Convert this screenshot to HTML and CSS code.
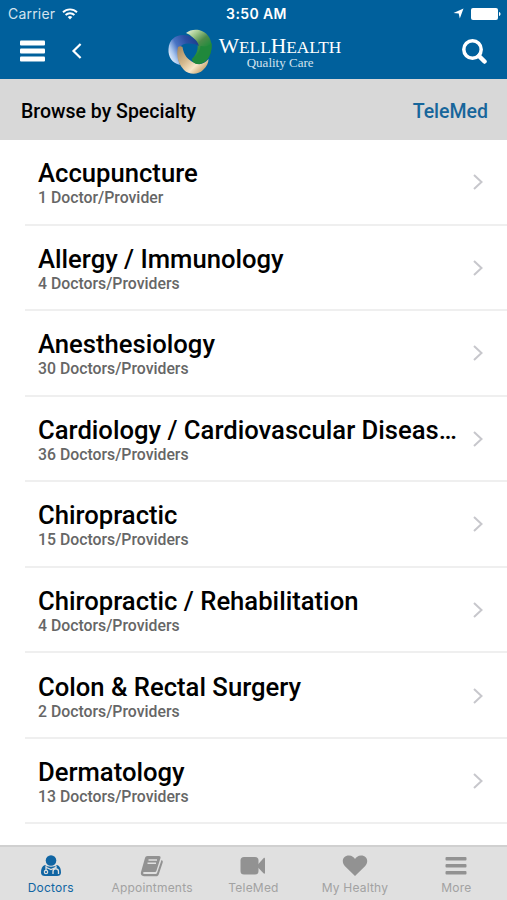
FILE: index.html
```html
<!DOCTYPE html>
<html lang="en">
<head>
  <meta charset="UTF-8">
  <meta name="viewport" content="width=device-width, initial-scale=1.0">
  <title>WellHealth Quality Care</title>
  <link rel="stylesheet" href="styles.css">
</head>
<body>
  <div class="app">
    <header class="header">
      <div class="status-bar">
        <div class="carrier">
          <span>Carrier</span>
          <svg width="16" height="12" viewBox="0 0 16 12" fill="none" stroke="#fff" stroke-width="1.9">
            <path d="M1 4.2a10 10 0 0 1 14 0M3.6 7a6.3 6.3 0 0 1 8.8 0"/>
            <path d="M8 11.5L5.7 9.1a3.3 3.3 0 0 1 4.6 0z" fill="#fff" stroke="none"/>
          </svg>
        </div>
        <div class="clock">3:50 AM</div>
        <div class="status-right">
          <svg width="11" height="11" viewBox="0 0 11 11"><path d="M10.500.5L6.800 10.500 5.700 5.600.5 5z" fill="#fff"/></svg>
          <svg width="30" height="12" viewBox="0 0 30 12" fill="#fff"><rect width="27" height="12" rx="2"/><path d="M28 4c2 .6 2 3.400 0 4z"/></svg>
        </div>
      </div>
      <div class="nav-bar">
        <div class="nav-left">
          <svg width="25" height="21" viewBox="0 0 25 21" fill="#fff">
            <rect y="-.5" width="25" height="5" rx="1"/><rect y="7.500" width="25" height="5" rx="1"/><rect y="15.500" width="25" height="5" rx="1"/>
          </svg>
          <svg width="10" height="16" viewBox="0 0 10 16"><path d="M8.600 1L1.500 8l7.100 7" fill="none" stroke="#fff" stroke-width="2.200"/></svg>
        </div>
        <div class="logo">
          <svg width="44" height="45" viewBox="0 0 44 45">
            <defs>
              <linearGradient id="blue" x1="0" y1=".8" x2="1" y2=".3">
                <stop offset="0" stop-color="#f4faff"/><stop offset=".2" stop-color="#a9c6ee"/><stop offset=".4" stop-color="#4a74c4"/><stop offset=".7" stop-color="#2b50a4"/><stop offset="1" stop-color="#1c3f8e"/>
              </linearGradient>
              <linearGradient id="green" x1="0" y1="0" x2=".6" y2="1">
                <stop offset="0" stop-color="#f1f9e4"/><stop offset=".25" stop-color="#a5ca90"/><stop offset=".5" stop-color="#4e8c4b"/><stop offset=".75" stop-color="#1f8c3c"/><stop offset="1" stop-color="#1b7a35"/>
              </linearGradient>
              <linearGradient id="gold" x1="0" y1="0" x2=".9" y2=".8">
                <stop offset="0" stop-color="#a3855a"/><stop offset=".45" stop-color="#d3b88d"/><stop offset=".75" stop-color="#f7e6c9"/><stop offset="1" stop-color="#c9a873"/>
              </linearGradient>
            </defs>
            <path d="M18 4C21 1 27 0 31 1c8 2 12 8 12.500 15 .5 9-4 17-12 19-4 .8-7-1-7.500-5 4-4 6.500-9 5.500-15C27 10 23 6 18 4z" fill="url(#green)"/>
            <path d="M12 36C4 34 0 28 .5 20 1 11 7 6 15 6c8 0 14 4 16 11-6-3-12-3-17-1-4 4-5 12-2 20z" fill="url(#blue)"/>
            <path d="M10 18c-2 9 0 17 6 23 5 5 14 5 19 0 4-4 5.500-7 5.500-11-4 5-9 6.500-14 4C20 31 15.500 26 14.500 18c-1.500-1-3-1-4.500 0z" fill="url(#gold)"/>
            <path d="M43.500 14c1 10-3.500 20-12 21-4 .5-7-1-7.500-5 5-3 8-7 8.500-13 4.500 1 9 .5 11-3z" fill="#20883b"/>
          </svg>
          <div class="logo-text">
            <div class="logo-name">W<small>ELL</small>H<small>EALTH</small></div>
            <div class="logo-tagline">Quality Care</div>
          </div>
        </div>
        <svg class="search" width="25" height="25" viewBox="0 0 25 25" fill="none" stroke="#fff">
          <circle cx="10.500" cy="10.500" r="8.700" stroke-width="3.500"/><path d="M17 17l5.500 5.500" stroke-width="4.500" stroke-linecap="round"/>
        </svg>
      </div>
    </header>

    <div class="sub-header">
      <span class="heading">Browse by Specialty</span>
      <span class="telemed">TeleMed</span>
    </div>

    <main class="list">
      <div class="item">
        <div class="item-text"><div class="name">Accupuncture</div><div class="count">1 Doctor/Provider</div></div>
        <svg class="chevron" viewBox="0 0 10 16"><path d="M1 1l7.500 7L1 15"/></svg>
      </div>
      <div class="item">
        <div class="item-text"><div class="name">Allergy / Immunology</div><div class="count">4 Doctors/Providers</div></div>
        <svg class="chevron" viewBox="0 0 10 16"><path d="M1 1l7.500 7L1 15"/></svg>
      </div>
      <div class="item">
        <div class="item-text"><div class="name">Anesthesiology</div><div class="count">30 Doctors/Providers</div></div>
        <svg class="chevron" viewBox="0 0 10 16"><path d="M1 1l7.500 7L1 15"/></svg>
      </div>
      <div class="item">
        <div class="item-text"><div class="name">Cardiology / Cardiovascular Diseas…</div><div class="count">36 Doctors/Providers</div></div>
        <svg class="chevron" viewBox="0 0 10 16"><path d="M1 1l7.500 7L1 15"/></svg>
      </div>
      <div class="item">
        <div class="item-text"><div class="name">Chiropractic</div><div class="count">15 Doctors/Providers</div></div>
        <svg class="chevron" viewBox="0 0 10 16"><path d="M1 1l7.500 7L1 15"/></svg>
      </div>
      <div class="item">
        <div class="item-text"><div class="name">Chiropractic / Rehabilitation</div><div class="count">4 Doctors/Providers</div></div>
        <svg class="chevron" viewBox="0 0 10 16"><path d="M1 1l7.500 7L1 15"/></svg>
      </div>
      <div class="item">
        <div class="item-text"><div class="name">Colon &amp; Rectal Surgery</div><div class="count">2 Doctors/Providers</div></div>
        <svg class="chevron" viewBox="0 0 10 16"><path d="M1 1l7.500 7L1 15"/></svg>
      </div>
      <div class="item">
        <div class="item-text"><div class="name">Dermatology</div><div class="count">13 Doctors/Providers</div></div>
        <svg class="chevron" viewBox="0 0 10 16"><path d="M1 1l7.500 7L1 15"/></svg>
      </div>
    </main>

    <nav class="tab-bar">
      <div class="tab active">
        <svg width="26" height="22" viewBox="0 0 26 22">
          <circle cx="13" cy="5.500" r="5.300" fill="currentColor"/>
          <path d="M7 10c2 2.200 10 2.200 12 0 3 1 4 4 4 7.500 0 2.500-1.500 3.500-4 3.500H7c-2.500 0-4-1-4-3.500C3 14 4 11 7 10z" fill="currentColor"/>
          <path d="M8 11v5M18 11v3M15 19v-2.500c0-3.500 5.500-3.500 5.500 0V19M8.500 12.500l4.500 2 4.500-2" fill="none" stroke="#e0e0e0" stroke-width="1.300"/>
          <circle cx="8" cy="17" r="1.700" fill="none" stroke="#e0e0e0" stroke-width="1.200"/>
        </svg>
        <span>Doctors</span>
      </div>
      <div class="tab">
        <svg width="26" height="22" viewBox="0 0 26 22">
          <path d="M8.500 1H20c1.300 0 1.800.8 1.500 2l-4 12.500c-.3 1-1 1.500-2 1.500H5.500c-2 0-2 2 0 2h10.700c1 0 1.700-.5 2-1.500L22.500 5c1.200.5 1.500 1.300 1.200 2.500l-4 12c-.4 1.200-1.200 1.800-2.500 1.800H5c-2.500 0-3.700-2-3-4.200L6 3c.4-1.300 1.200-2 2.500-2z" fill="currentColor"/>
          <path d="M9.500 5h8.500M8.500 8.300h8.500" stroke="#e0e0e0" stroke-width="1.400"/>
        </svg>
        <span>Appointments</span>
      </div>
      <div class="tab">
        <svg width="26" height="22" viewBox="0 0 26 22" fill="currentColor">
          <rect x=".5" y="2" width="18" height="17.500" rx="3.500"/><path d="M17 10.500l6.500-7.200c.8-.8 1.500-.5 1.500.5v14c0 1-.7 1.300-1.500.5L17 11.500z"/>
        </svg>
        <span>TeleMed</span>
      </div>
      <div class="tab">
        <svg width="26" height="22" viewBox="0 0 26 22"><path d="M13 21L3 11.200C-1 7 .5.500 7 .5c3 0 5 2 6 3.500C14 2.500 16 .5 19 .5c6.500 0 8 6.500 4 10.700z" fill="currentColor"/></svg>
        <span>My Healthy</span>
      </div>
      <div class="tab">
        <svg width="26" height="22" viewBox="0 0 26 22" fill="currentColor">
          <rect x="2.500" y="2" width="21" height="3.600" rx="1"/><rect x="2.500" y="9" width="21" height="3.600" rx="1"/><rect x="2.500" y="16" width="21" height="3.600" rx="1"/>
        </svg>
        <span>More</span>
      </div>
    </nav>
  </div>
</body>
</html>
```

FILE: styles.css
```css
* {
  box-sizing: border-box;
}
body {
  margin: 0;
  font-family: Roboto, sans-serif;
  background: #fff;
  color: #000;
}
svg {
  display: block;
  flex-shrink: 0;
}
.app {
  display: flex;
  flex-direction: column;
  width: 507px;
  height: 900px;
  overflow: hidden;
}
.header {
  height: 79px;
  background: #00609c;
  color: #fff;
}
.status-bar {
  display: grid;
  grid-template-columns: 1fr auto 1fr;
  align-items: center;
  height: 27px;
  padding: 0 6px 0 8px;
  font-family: Inter, sans-serif;
  font-size: 14px;
}
.carrier {
  display: flex;
  align-items: center;
  gap: 7px;
  color: #d3e3ee;
  letter-spacing: 0.2px;
}
.clock {
  padding-left: 4px;
  font-weight: 600;
  letter-spacing: 0.4px;
}
.status-right {
  display: flex;
  align-items: center;
  justify-content: flex-end;
  gap: 7px;
}
.nav-bar {
  display: grid;
  grid-template-columns: 1fr auto 1fr;
  align-items: center;
  height: 48px;
  padding: 0 20px;
}
.nav-left {
  display: flex;
  align-items: center;
  gap: 27px;
}
.nav-left svg {
  overflow: visible;
}
.logo {
  display: flex;
  gap: 7px;
  padding: 1px 0 0 2px;
}
.logo-text {
  padding-top: 8px;
  font-family: "Liberation Serif", serif;
}
.logo-name {
  font-size: 21.500px;
  line-height: 18px;
  white-space: nowrap;
}
.logo-name small {
  font-size: 17.300px;
}
.logo-tagline {
  padding-left: 28px;
  font-size: 13px;
  line-height: 11px;
  color: #d3e3ee;
}
.search {
  justify-self: end;
}
.sub-header {
  display: flex;
  align-items: center;
  justify-content: space-between;
  height: 61px;
  padding: 3px 19px 0 21px;
  background: #d8d8d8;
  font-size: 19.500px;
  font-weight: 500;
}
.telemed {
  color: #17669b;
}
.list {
  flex: 1;
  padding-left: 25px;
}
.item {
  display: flex;
  align-items: center;
  justify-content: space-between;
  height: 85.55px;
  padding: 1px 24px 0 13px;
  border-bottom: 2px solid #efefef;
}
.name {
  padding-top: 1px;
  font-size: 25.650px;
  line-height: 30px;
  font-weight: 500;
  white-space: nowrap;
}
.count {
  font-size: 15.800px;
  line-height: 19px;
  font-weight: 500;
  color: #666;
}
.chevron {
  width: 10px;
  height: 16px;
  fill: none;
  stroke: #c7c7cc;
  stroke-width: 2;
}
.tab-bar {
  display: grid;
  grid-template-columns: repeat(5, 1fr);
  height: 55px;
  padding-top: 8px;
  border-top: 2px solid #d0d0d0;
  background: #e0e0e0;
}
.tab {
  display: flex;
  flex-direction: column;
  align-items: center;
  gap: 3px;
  color: #929292;
  font-family: Inter, sans-serif;
  font-size: 12px;
  line-height: 16px;
  letter-spacing: 0.2px;
}
.tab span {
  color: #a2a2a2;
}
.tab.active,
.tab.active span {
  color: #1065a3;
}
```
